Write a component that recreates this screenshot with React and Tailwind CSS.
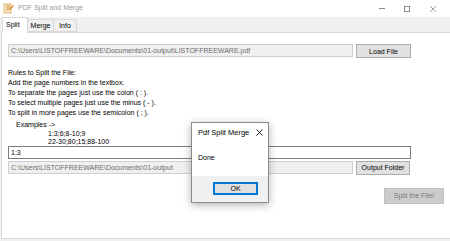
const ui = { fontFamily: '"Liberation Sans", Arial, sans-serif' }

function Field({ value, width, white }) {
  return (
    <div
      className={
        'h-[13px] flex items-center px-[2px] text-[7px] leading-none border ' +
        (white ? 'bg-white border-[#7a7a7a] text-black' : 'bg-[#f0f0f0] border-[#cfcfcf] text-[#6d6d6d]')
      }
      style={{ width }}
    >
      {value}
    </div>
  )
}

function Btn({ children, className = '' }) {
  return (
    <div className={'h-[14px] flex items-center justify-center bg-[#e1e1e1] border border-[#adadad] text-[7px] text-black leading-none ' + className}>
      {children}
    </div>
  )
}

function AppIcon() {
  return (
    <svg width="11" height="11" viewBox="0 0 11 11">
      <rect x="1" y="1" width="7" height="9" fill="#f6e7c8" stroke="#d9a85a" strokeWidth="0.8" />
      <path d="M3 3h4M3 5h4M3 7h3" stroke="#c98a2e" strokeWidth="0.8" />
      <path d="M6 6l4-4 1 1-4 4z" fill="#e08a1e" />
    </svg>
  )
}

export default function App() {
  return (
    <div className="w-[450px] h-[241px] bg-[#f0f0f0] relative overflow-hidden" style={ui}>
      {/* title bar */}
      <div className="h-[17px] bg-white flex items-center">
        <div className="ml-[3px] mr-[4px] flex items-center"><AppIcon /></div>
        <span className="text-[7px] text-[#9a9a9a]">PDF Split and Merge</span>
        <div className="ml-auto flex items-center h-full">
          <div className="w-[25px] flex justify-center"><div className="w-[6px] h-[1px] bg-[#8a8a8a]" /></div>
          <div className="w-[26px] flex justify-center"><div className="w-[6px] h-[6px] border border-[#8a8a8a]" /></div>
          <div className="w-[30px] flex justify-center pr-[4px]">
            <svg width="6" height="6" viewBox="0 0 6 6"><path d="M0 0L6 6M6 0L0 6" stroke="#8a8a8a" strokeWidth="0.8" /></svg>
          </div>
        </div>
      </div>

      {/* tabs */}
      <div className="h-[15px] flex items-end pl-[2px] relative z-10">
        <div className="w-[26px] bg-white border border-b-0 border-[#d9d9d9] text-[7px] pl-[3px] pt-[3px] leading-none mb-[-1px] h-[16px]">Split</div>
        <div className="h-[13px] w-[26px] border border-l-0 border-[#d9d9d9] text-[7px] flex items-center justify-center leading-none">Merge</div>
        <div className="h-[13px] w-[23px] border border-l-0 border-[#d9d9d9] text-[7px] flex items-center justify-center leading-none">Info</div>
      </div>

      {/* panel */}
      <div className="ml-[1px] h-[207px] bg-white border border-r-0 border-[#d9d9d9] pl-[6px] pt-[10px] text-black">
        <div className="flex items-center gap-[3px]">
          <Field width={345} value="C:\Users\LISTOFFREEWARE\Documents\01-output\LISTOFFREEWARE.pdf" />
          <Btn className="w-[55px] mt-[1px]">Load File</Btn>
        </div>

        <div className="mt-[10px] text-[7px] leading-[10px]">
          <div>Rules to Split the File:</div>
          <div>Add the page numbers in the textbox.</div>
          <div>To separate the pages just use the colon ( : ).</div>
          <div>To select multiple pages just use the minus ( - ).</div>
          <div>To split in more pages use the semicolon ( ; ).</div>
        </div>

        <div className="mt-[3px] text-[7px] leading-[8.5px]">
          <div className="pl-[8px]">Examples -&gt;</div>
          <div className="pl-[40px]">1:3;6;8-10;9</div>
          <div className="pl-[40px]">22-30;80;15;88-100</div>
        </div>

        <div className="mt-[-1px]">
          <Field white width={403} value="1:3" />
        </div>
        <div className="mt-[2px] flex items-center gap-[3px]">
          <Field width={345} value="C:\Users\LISTOFFREEWARE\Documents\01-output" />
          <Btn className="w-[54px]">Output Folder</Btn>
        </div>

        <div className="mt-[13px] flex justify-end pr-[6px]">
          <div className="w-[60px] h-[16px] flex items-center justify-center bg-[#cccccc] border border-[#bfbfbf] text-[7px] text-[#7d7d7d] leading-none">
            Split the File!
          </div>
        </div>
      </div>

      {/* message box */}
      <div className="absolute left-[191px] top-[122px] w-[78px] h-[81px] bg-white border border-[#8c8c8c] shadow-[0_2px_8px_rgba(0,0,0,0.3)] flex flex-col">
        <div className="h-[17px] flex items-center pl-[6px] pr-[5px] mt-[1px]">
          <span className="text-[7.5px] text-black">Pdf Split Merge</span>
          <svg className="ml-auto" width="7" height="7" viewBox="0 0 7 7"><path d="M0.5 0.5L6.5 6.5M6.5 0.5L0.5 6.5" stroke="#111" strokeWidth="0.9" /></svg>
        </div>
        <div className="pl-[6px] pt-[13px] text-[7px] leading-none h-[35px]">Done</div>
        <div className="flex-1 bg-[#f0f0f0] flex justify-end items-start pr-[10px] pt-[6px]">
          <div className="w-[45px] h-[13px] bg-[#e1e1e1] border border-[#0078d7] outline outline-1 outline-[#0078d7] outline-offset-[-2px] flex items-center justify-center text-[7px] leading-none">OK</div>
        </div>
      </div>
    </div>
  )
}
